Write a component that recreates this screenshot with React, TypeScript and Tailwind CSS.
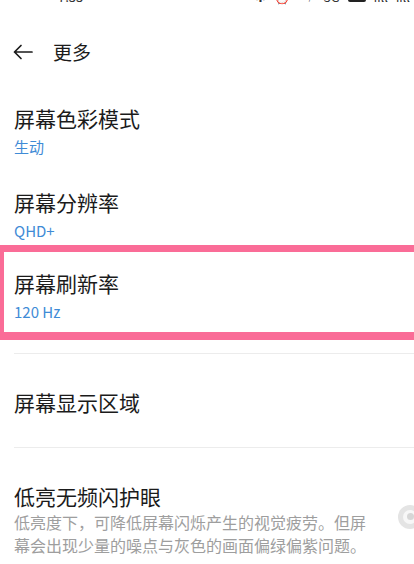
import type { ReactNode } from 'react';

const font = { fontFamily: '"Noto Sans CJK SC", "Noto Sans", sans-serif' };

function Title({ children }: { children: ReactNode }) {
  return <p className="text-[21px] leading-[28px] text-[#1b1b1b]">{children}</p>;
}

function Value({ children }: { children: ReactNode }) {
  return <p className="mt-[5px] text-[15px] leading-[20px] text-[#3f8bd6]">{children}</p>;
}

export default function App() {
  return (
    <div className="w-[414px] h-[564px] overflow-hidden bg-white" style={font}>
      {/* status bar, mostly cut off at the top */}
      <div className="h-[5px] overflow-hidden">
        <div className="-mt-[11px] h-[16px] flex items-center justify-between pl-[58px] pr-[4px] text-[13px] leading-[16px] text-[#333]">
          <span>7:33</span>
          <div className="flex items-center gap-[8px]">
            <span>✱</span>
            <span>⏰</span>
            <span className="text-[8px]">KB/s</span>
            <span>5G</span>
            <span className="w-[18px] h-[10px] bg-[#222] rounded-[2px]" />
            <span>ııll</span>
            <span>ııll</span>
          </div>
        </div>
      </div>

      {/* header */}
      <div className="mt-[34px] h-[26px] flex items-center pl-[13px]">
        <svg width="20" height="16" viewBox="0 0 20 16" fill="none" stroke="#1b1b1b" strokeWidth="1.7" strokeLinecap="round" strokeLinejoin="round">
          <path d="M19 8H1.5M8 1.5L1.5 8L8 14.5" />
        </svg>
        <span className="ml-[20px] text-[19px] leading-[26px] text-[#1b1b1b]">更多</span>
      </div>

      <div className="pl-[14px] mt-[39px]">
        <Title>屏幕色彩模式</Title>
        <Value>生动</Value>
      </div>

      <div className="pl-[14px] mt-[31px]">
        <Title>屏幕分辨率</Title>
        <Value>QHD+</Value>
      </div>

      <div className="mt-[4px] w-[430px] border-t-[7px] border-b-[8px] border-l-[4px] border-[#fa6c97] pl-[10px] pt-[17px] pb-[10px]">
        <Title>屏幕刷新率</Title>
        <Value>120 Hz</Value>
      </div>

      <div className="ml-[14px] mt-[13px] h-px bg-[#ececec]" />

      <div className="pl-[14px] mt-[34px]">
        <Title>屏幕显示区域</Title>
      </div>

      <div className="ml-[14px] mt-[31px] h-px bg-[#ececec]" />

      <div className="pl-[14px] mt-[34px] flex items-center">
        <div className="w-[356px] shrink-0">
          <Title>低亮无频闪护眼</Title>
          <p className="mt-[1px] text-[16px] leading-[23px] text-[#9e9e9e]">
            低亮度下，可降低屏幕闪烁产生的视觉疲劳。但屏幕会出现少量的噪点与灰色的画面偏绿偏紫问题。
          </p>
        </div>
        <div className="ml-[28px] -mt-[6px] shrink-0 w-[24px] h-[24px] rounded-full bg-[#e4e4e4] flex items-center justify-center">
          <div className="w-[14px] h-[14px] rounded-full bg-[#f7f7f7] flex items-center justify-center">
            <div className="w-[7px] h-[7px] rounded-full bg-[#d6d6d6]" />
          </div>
        </div>
      </div>
    </div>
  );
}
